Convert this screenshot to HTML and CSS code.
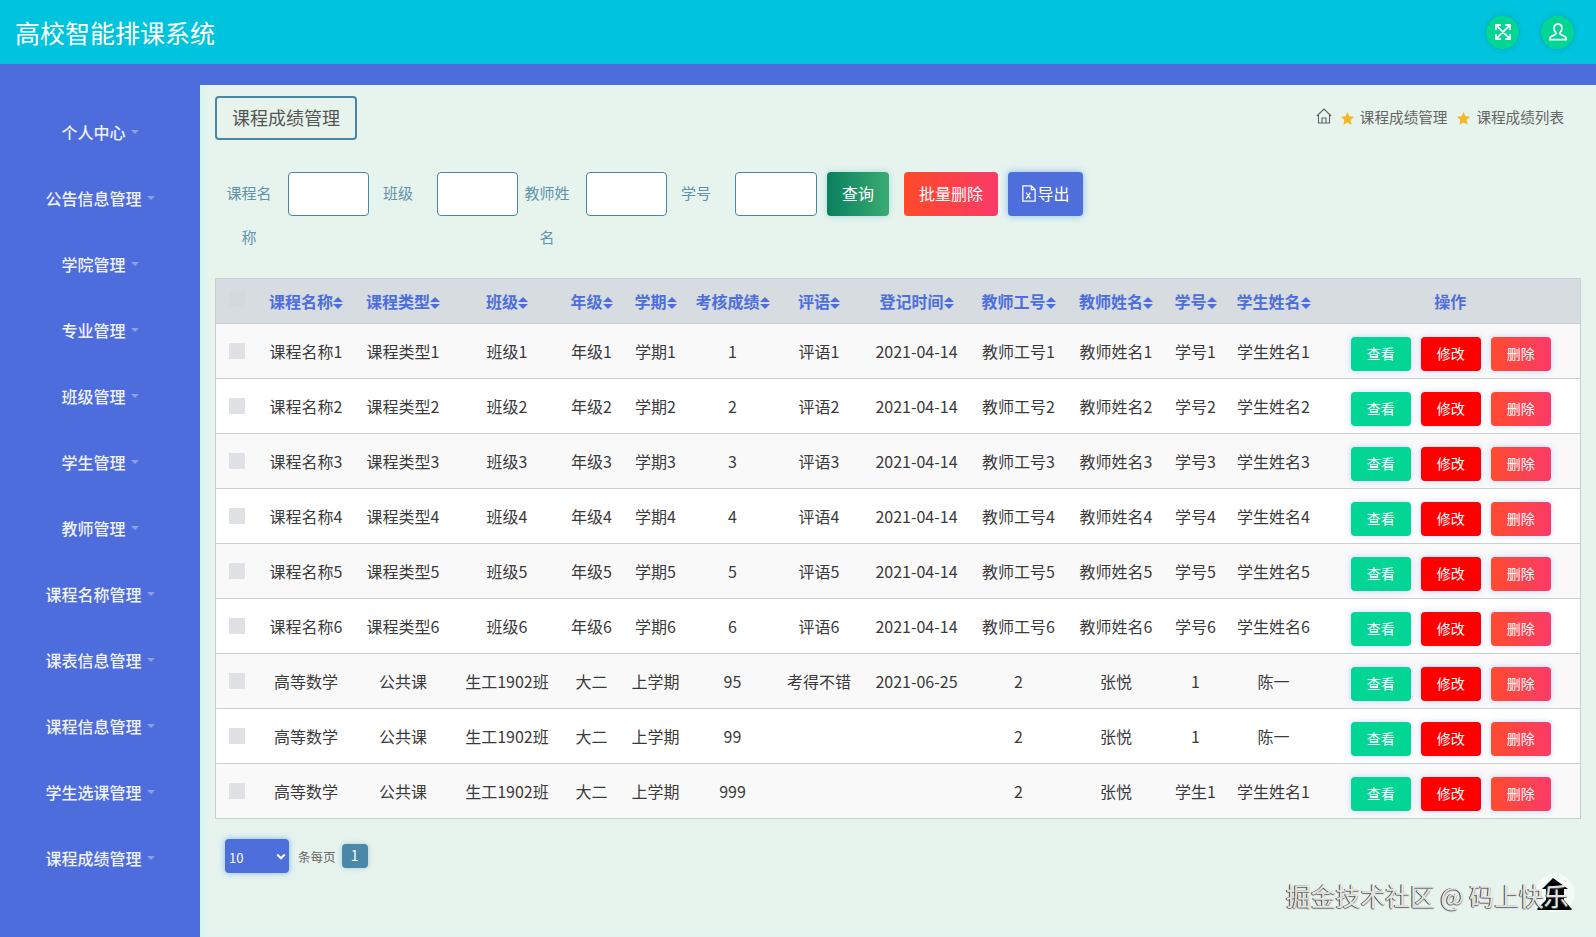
FILE: index.html
```html
<!DOCTYPE html>
<html lang="zh-CN">
<head>
<meta charset="utf-8">
<title>高校智能排课系统</title>
<link rel="stylesheet" href="styles.css">
</head>
<body>
<header class="topbar">
  <h1 class="brand">高校智能排课系统</h1>
  <div class="top-actions">
    <span class="round-btn"><svg viewBox="0 0 24 24" class="round-icon"><path d="M3.500 3.500l17 17M20.500 3.500l-17 17M3.500 9.500v-6h6M14.500 3.500h6v6M20.500 14.500v6h-6M9.500 20.500h-6v-6"/></svg></span>
    <span class="round-btn"><svg viewBox="0 0 24 24" class="round-icon"><path d="M12 2.500c-3 0-4.800 2.200-4.800 5 0 2.400 1 4 2.200 5.300.4.500.3 1.500-.4 1.900L3.500 17.600c-1 .6-1.300 1.200-1.300 2v1.600h19.600v-1.600c0-.8-.3-1.400-1.300-2L14.900 14.700c-.7-.4-.8-1.400-.4-1.900 1.200-1.300 2.200-2.900 2.200-5.300 0-2.800-1.800-5-4.700-5z"/></svg></span>
  </div>
</header>
<div class="layout">
  <nav class="sidebar">
    <a class="nav-item">个人中心</a>
    <a class="nav-item">公告信息管理</a>
    <a class="nav-item">学院管理</a>
    <a class="nav-item">专业管理</a>
    <a class="nav-item">班级管理</a>
    <a class="nav-item">学生管理</a>
    <a class="nav-item">教师管理</a>
    <a class="nav-item">课程名称管理</a>
    <a class="nav-item">课表信息管理</a>
    <a class="nav-item">课程信息管理</a>
    <a class="nav-item">学生选课管理</a>
    <a class="nav-item">课程成绩管理</a>
  </nav>
  <main class="content">
    <div class="title-row">
      <div class="page-title">课程成绩管理</div>
      <div class="crumbs">
        <svg viewBox="0 0 16 16" class="home-icon"><path d="M.8 8L8 1l7.200 7M2.500 6.800V15h11V6.800M6 15v-5h4v5"/></svg>
        <svg viewBox="0 0 24 24" class="star"><path d="M12 1.500l3.200 6.900 7.300.9-5.400 5.100 1.400 7.500L12 18.200l-6.500 3.700 1.400-7.500L1.500 9.300l7.300-.9z"/></svg>
        <span>课程成绩管理</span>
        <svg viewBox="0 0 24 24" class="star"><path d="M12 1.500l3.200 6.900 7.300.9-5.400 5.100 1.400 7.500L12 18.200l-6.500 3.700 1.400-7.500L1.500 9.300l7.300-.9z"/></svg>
        <span>课程成绩列表</span>
      </div>
    </div>
    <form class="search">
      <label class="s-label">课程名称</label><input class="s-input" type="text">
      <label class="s-label">班级</label><input class="s-input" type="text">
      <label class="s-label">教师姓名</label><input class="s-input" type="text">
      <label class="s-label">学号</label><input class="s-input s-input-last" type="text">
      <button type="button" class="btn btn-query">查询</button>
      <button type="button" class="btn btn-batch">批量删除</button>
      <button type="button" class="btn btn-export"><svg viewBox="0 0 16 18" class="xls"><path d="M1.500 1h9l4 4v12h-13zM10.500 1v4h4M5 8l4.500 6.500M9.500 8L5 14.500"/></svg>导出</button>
    </form>
    <table class="grid">
      <colgroup>
        <col class="c-check"><col class="c-name"><col class="c-type"><col class="c-class"><col class="c-year"><col class="c-term"><col class="c-score"><col class="c-note"><col class="c-date"><col class="c-tno"><col class="c-tname"><col class="c-sno"><col class="c-sname"><col>
      </colgroup>
      <thead>
        <tr>
          <th><span class="box box-head"></span></th>
          <th>课程名称<i class="sort"></i></th>
          <th>课程类型<i class="sort"></i></th>
          <th>班级<i class="sort"></i></th>
          <th>年级<i class="sort"></i></th>
          <th>学期<i class="sort"></i></th>
          <th>考核成绩<i class="sort"></i></th>
          <th>评语<i class="sort"></i></th>
          <th>登记时间<i class="sort"></i></th>
          <th>教师工号<i class="sort"></i></th>
          <th>教师姓名<i class="sort"></i></th>
          <th>学号<i class="sort"></i></th>
          <th>学生姓名<i class="sort"></i></th>
          <th>操作</th>
        </tr>
      </thead>
      <tbody>
        <tr><td><span class="box"></span></td><td>课程名称1</td><td>课程类型1</td><td>班级1</td><td>年级1</td><td>学期1</td><td>1</td><td>评语1</td><td>2021-04-14</td><td>教师工号1</td><td>教师姓名1</td><td>学号1</td><td>学生姓名1</td><td class="ops"><button class="op op-view">查看</button><button class="op op-edit">修改</button><button class="op op-del">删除</button></td></tr>
        <tr><td><span class="box"></span></td><td>课程名称2</td><td>课程类型2</td><td>班级2</td><td>年级2</td><td>学期2</td><td>2</td><td>评语2</td><td>2021-04-14</td><td>教师工号2</td><td>教师姓名2</td><td>学号2</td><td>学生姓名2</td><td class="ops"><button class="op op-view">查看</button><button class="op op-edit">修改</button><button class="op op-del">删除</button></td></tr>
        <tr><td><span class="box"></span></td><td>课程名称3</td><td>课程类型3</td><td>班级3</td><td>年级3</td><td>学期3</td><td>3</td><td>评语3</td><td>2021-04-14</td><td>教师工号3</td><td>教师姓名3</td><td>学号3</td><td>学生姓名3</td><td class="ops"><button class="op op-view">查看</button><button class="op op-edit">修改</button><button class="op op-del">删除</button></td></tr>
        <tr><td><span class="box"></span></td><td>课程名称4</td><td>课程类型4</td><td>班级4</td><td>年级4</td><td>学期4</td><td>4</td><td>评语4</td><td>2021-04-14</td><td>教师工号4</td><td>教师姓名4</td><td>学号4</td><td>学生姓名4</td><td class="ops"><button class="op op-view">查看</button><button class="op op-edit">修改</button><button class="op op-del">删除</button></td></tr>
        <tr><td><span class="box"></span></td><td>课程名称5</td><td>课程类型5</td><td>班级5</td><td>年级5</td><td>学期5</td><td>5</td><td>评语5</td><td>2021-04-14</td><td>教师工号5</td><td>教师姓名5</td><td>学号5</td><td>学生姓名5</td><td class="ops"><button class="op op-view">查看</button><button class="op op-edit">修改</button><button class="op op-del">删除</button></td></tr>
        <tr><td><span class="box"></span></td><td>课程名称6</td><td>课程类型6</td><td>班级6</td><td>年级6</td><td>学期6</td><td>6</td><td>评语6</td><td>2021-04-14</td><td>教师工号6</td><td>教师姓名6</td><td>学号6</td><td>学生姓名6</td><td class="ops"><button class="op op-view">查看</button><button class="op op-edit">修改</button><button class="op op-del">删除</button></td></tr>
        <tr><td><span class="box"></span></td><td>高等数学</td><td>公共课</td><td>生工1902班</td><td>大二</td><td>上学期</td><td>95</td><td>考得不错</td><td>2021-06-25</td><td>2</td><td>张悦</td><td>1</td><td>陈一</td><td class="ops"><button class="op op-view">查看</button><button class="op op-edit">修改</button><button class="op op-del">删除</button></td></tr>
        <tr><td><span class="box"></span></td><td>高等数学</td><td>公共课</td><td>生工1902班</td><td>大二</td><td>上学期</td><td>99</td><td></td><td></td><td>2</td><td>张悦</td><td>1</td><td>陈一</td><td class="ops"><button class="op op-view">查看</button><button class="op op-edit">修改</button><button class="op op-del">删除</button></td></tr>
        <tr><td><span class="box"></span></td><td>高等数学</td><td>公共课</td><td>生工1902班</td><td>大二</td><td>上学期</td><td>999</td><td></td><td></td><td>2</td><td>张悦</td><td>学生1</td><td>学生姓名1</td><td class="ops"><button class="op op-view">查看</button><button class="op op-edit">修改</button><button class="op op-del">删除</button></td></tr>
      </tbody>
    </table>
    <div class="pager">
      <div class="size-wrap">
        <select class="size"><option>10</option></select>
        <svg viewBox="0 0 12 8" class="chev"><path d="M1.500 1.500L6 6l4.500-4.500"/></svg>
      </div>
      <span class="per">条每页</span>
      <span class="page-num">1</span>
    </div>
  </main>
</div>
<svg viewBox="0 0 40 42" class="back-top"><circle cx="20" cy="20" r="19.500"/><path class="back-arrow" d="M18 5L7 16h4v11l-7 7-2 2q0 1 2 1h31q2 0 2-1l-2-2-6-7V16h4z"/></svg>
<div class="watermark">掘金技术社区 @ 码上快乐</div>
</body>
</html>
```
FILE: styles.css
```css
* { box-sizing: border-box; }
html, body { height: 100%; }
body {
  margin: 0;
  overflow: hidden;
  display: flex;
  flex-direction: column;
  font-family: "Noto Sans CJK SC", "Noto Sans", "Liberation Sans", sans-serif;
  font-size: 16px;
  color: #3a3a3a;
  background: #4e6ddc;
}
.topbar {
  flex: 0 0 64px;
  background: #00c4dd;
  display: flex;
  align-items: center;
  justify-content: space-between;
  padding: 0 22px 0 15px;
}
.brand {
  margin: 0;
  font-size: 25px;
  line-height: 34px;
  font-weight: 400;
  color: #fff;
}
.top-actions { display: flex; gap: 22px; }
.round-btn {
  width: 33px;
  height: 33px;
  border-radius: 50%;
  background: #03d592;
  box-shadow: 0 0 6px rgba(0, 130, 150, .45);
  display: flex;
  align-items: center;
  justify-content: center;
}
.round-icon { width: 20px; height: 20px; fill: none; stroke: #fff; stroke-width: 2; }
.layout { flex: 1; display: flex; min-height: 0; }
.sidebar {
  flex: 0 0 200px;
  padding-top: 35px;
  display: flex;
  flex-direction: column;
}
.nav-item {
  height: 66px;
  display: flex;
  align-items: center;
  justify-content: center;
  color: #eef2ff;
  font-size: 16px;
  font-weight: 500;
  line-height: 24px;
}
.nav-item::after {
  content: "";
  margin-left: 5px;
  border-top: 4px solid #8ea0e4;
  border-left: 4px solid transparent;
  border-right: 4px solid transparent;
}
.content {
  flex: 1;
  margin-top: 21px;
  padding: 11px 15px 0;
  background: #e7f3ed;
  box-shadow: inset 7px 0 7px -4px #d2f6f8;
  min-width: 0;
}
.title-row {
  display: flex;
  justify-content: space-between;
  align-items: center;
  padding-right: 17px;
}
.page-title {
  height: 44px;
  padding: 0 15px;
  border: 2px solid #4a86a4;
  border-radius: 4px;
  font-size: 18px;
  line-height: 38px;
  color: #555;
}
.crumbs {
  display: flex;
  align-items: center;
  font-size: 14.600px;
  line-height: 24px;
  color: #666;
  margin-top: -2px;
}
.home-icon { width: 16px; height: 16px; fill: none; stroke: #5c6468; stroke-width: 1.100; margin: -3px 8px 0 0; }
.star { width: 15px; height: 15px; fill: #f2b925; margin: 3px 5px 0 0; }
.crumbs span + .star { margin-left: 9px; }
.search {
  display: flex;
  align-items: flex-start;
  height: 94px;
  margin-top: 32px;
  padding-left: 5px;
  margin-bottom: 12px;
}
.s-label {
  flex: 0 0 58px;
  width: 58px;
  margin: -1px 10px 0 0;
  font-size: 15px;
  line-height: 44px;
  text-align: center;
  color: #5f93aa;
}
.s-input {
  flex: 0 0 81px;
  width: 81px;
  height: 44px;
  border: 1px solid #4a86a4;
  border-radius: 4px;
  background: #fff;
}
.s-input-last { flex-basis: 82px; width: 82px; }
.btn {
  height: 44px;
  border: 0;
  border-radius: 4px;
  color: #fff;
  font-family: inherit;
  font-size: 16px;
  padding: 0 0 2px;
  display: flex;
  align-items: center;
  justify-content: center;
}
.btn-query {
  width: 62px;
  margin-left: 10px;
  background: linear-gradient(90deg, #097f5e, #3aac72);
  box-shadow: 0 0 6px rgba(30, 190, 210, .35);
}
.btn-batch {
  width: 94px;
  margin-left: 15px;
  background: linear-gradient(90deg, #ff4a28, #f93a68);
  box-shadow: 0 0 6px rgba(255, 255, 255, .5);
}
.btn-export {
  width: 75px;
  margin-left: 10px;
  background: #4e6edc;
  box-shadow: 0 0 7px rgba(60, 150, 250, .6);
}
.xls { width: 16px; height: 17px; fill: none; stroke: #fff; stroke-width: 1.300; }
.grid {
  width: 1366px;
  border-collapse: collapse;
  table-layout: fixed;
  border: 1px solid #c9cfd2;
  background: #fff;
}
.c-check { width: 42px; }
.c-name { width: 97px; }
.c-type { width: 97px; }
.c-class { width: 111px; }
.c-year { width: 58px; }
.c-term { width: 70px; }
.c-score { width: 84px; }
.c-note { width: 89px; }
.c-date { width: 106px; }
.c-tno { width: 98px; }
.c-tname { width: 97px; }
.c-sno { width: 62px; }
.c-sname { width: 94px; }
.grid th {
  height: 45px;
  padding: 0;
  background: #d6dcdf;
  color: #4e6edc;
  font-weight: 700;
  font-size: 16px;
  line-height: 24px;
  white-space: nowrap;
  text-align: center;
  vertical-align: middle;
  border-bottom: 1px solid #c9cfd2;
}
.grid td {
  height: 55px;
  padding: 15px 0 0;
  line-height: 24px;
  white-space: nowrap;
  text-align: center;
  vertical-align: top;
  border-bottom: 1px solid #c9cfd2;
  color: #3a3a3a;
}
.grid tbody tr:nth-child(odd) td { background: #f9f9fa; }
.sort {
  display: inline-block;
  width: 10px;
  height: 12px;
  position: relative;
  vertical-align: -1px;
}
.sort::before, .sort::after {
  content: "";
  position: absolute;
  left: 0;
  border-left: 5px solid transparent;
  border-right: 5px solid transparent;
}
.sort::before { top: 0; border-bottom: 5.500px solid #4e6edc; }
.sort::after { bottom: 0; border-top: 5.500px solid #4e6edc; }
.box {
  display: block;
  width: 16px;
  height: 16px;
  margin: 4px auto 0;
  background: #dfe1e4;
}
.box-head { margin-top: -4px; background: #d3d9dc; }
.grid td.ops { padding: 13px 0 0 1px; }
.op {
  width: 60px;
  height: 34px;
  margin: 0 5px;
  padding: 0 0 3px;
  border: 0;
  border-radius: 4px;
  color: #fff;
  font-family: inherit;
  font-size: 14px;
  box-shadow: 0 0 6px rgba(90, 130, 250, .3);
}
.op-view { background: #02d594; }
.op-edit { background: #fe0000; }
.op-del { background: linear-gradient(90deg, #ff4b2f, #f93b67); }
.pager {
  display: flex;
  align-items: center;
  margin: 20px 0 0 10px;
}
.size-wrap { position: relative; width: 64px; height: 34px; }
.size {
  width: 64px;
  height: 34px;
  padding: 2px 0 0 4px;
  border: 0;
  border-radius: 4px;
  background: #4e6edc;
  color: #fff;
  font-family: inherit;
  font-size: 13px;
  appearance: none;
  box-shadow: 0 0 6px rgba(60, 150, 250, .6);
}
.chev {
  position: absolute;
  right: 3px;
  top: 14px;
  width: 10px;
  height: 7px;
  fill: none;
  stroke: #fff;
  stroke-width: 2.500;
  pointer-events: none;
}
.per { margin-left: 9px; font-size: 12.500px; color: #666; }
.page-num {
  margin-left: 6px;
  width: 26px;
  height: 24px;
  border-radius: 4px;
  background: #4a87a8;
  color: #fff;
  font-size: 14px;
  line-height: 22px;
  text-align: center;
  box-shadow: 0 0 5px rgba(60, 150, 200, .4);
}
.back-top {
  position: absolute;
  left: 1535px;
  top: 873px;
  width: 40px;
  height: 42px;
}
.back-top circle { fill: rgba(255, 255, 255, .55); }
.back-arrow { fill: #000; }
.watermark {
  position: absolute;
  left: 1286px;
  top: 877px;
  font-size: 24.800px;
  line-height: 36px;
  white-space: nowrap;
  color: rgba(250, 250, 250, .9);
  text-shadow: -1px 0 0 #444, 0 1px 1px #666;
}
```
